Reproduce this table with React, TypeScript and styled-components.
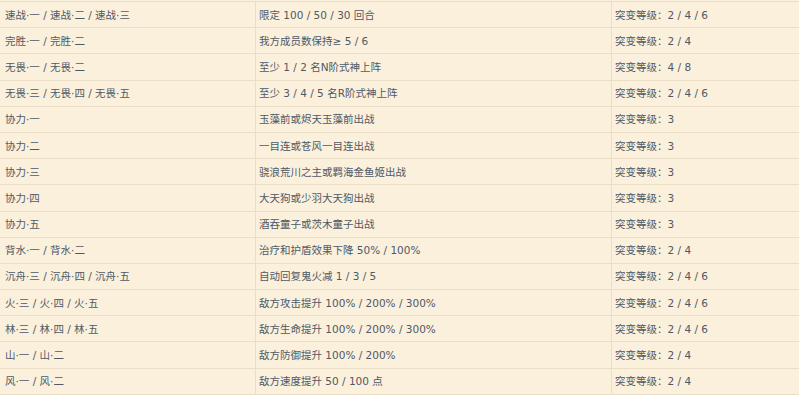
import * as React from "react";
import styled, { createGlobalStyle } from "styled-components";

interface BuffRow {
  name: string;
  effect: string;
  level: string;
}

const rows: BuffRow[] = [
  { name: "速战·一 / 速战·二 / 速战·三", effect: "限定 100 / 50 / 30 回合", level: "2 / 4 / 6" },
  { name: "完胜·一 / 完胜·二", effect: "我方成员数保持≥ 5 / 6", level: "2 / 4" },
  { name: "无畏·一 / 无畏·二", effect: "至少 1 / 2 名N阶式神上阵", level: "4 / 8" },
  { name: "无畏·三 / 无畏·四 / 无畏·五", effect: "至少 3 / 4 / 5 名R阶式神上阵", level: "2 / 4 / 6" },
  { name: "协力·一", effect: "玉藻前或烬天玉藻前出战", level: "3" },
  { name: "协力·二", effect: "一目连或苍风一目连出战", level: "3" },
  { name: "协力·三", effect: "骁浪荒川之主或羁海金鱼姬出战", level: "3" },
  { name: "协力·四", effect: "大天狗或少羽大天狗出战", level: "3" },
  { name: "协力·五", effect: "酒吞童子或茨木童子出战", level: "3" },
  { name: "背水·一 / 背水·二", effect: "治疗和护盾效果下降 50% / 100%", level: "2 / 4" },
  { name: "沉舟·三 / 沉舟·四 / 沉舟·五", effect: "自动回复鬼火减 1 / 3 / 5", level: "2 / 4 / 6" },
  { name: "火·三 / 火·四 / 火·五", effect: "敌方攻击提升 100% / 200% / 300%", level: "2 / 4 / 6" },
  { name: "林·三 / 林·四 / 林·五", effect: "敌方生命提升 100% / 200% / 300%", level: "2 / 4 / 6" },
  { name: "山·一 / 山·二", effect: "敌方防御提升 100% / 200%", level: "2 / 4" },
  { name: "风·一 / 风·二", effect: "敌方速度提升 50 / 100 点", level: "2 / 4" },
];

const GlobalStyle = createGlobalStyle`
  html, body {
    margin: 0;
    padding: 0;
    background: #fbf0dc;
    overflow: hidden;
  }
`;

const Page = styled.div`
  width: 799px;
  height: 395px;
  overflow: hidden;
  background: #fbf0dc;
  padding-top: 1px;
  box-sizing: border-box;
`;

const Table = styled.table`
  border-collapse: collapse;
  table-layout: fixed;
  width: 820px;
  font-family: "DejaVu Sans", "Noto Sans CJK SC", sans-serif;
  font-size: 10.5px;
  color: #4f5966;
`;

const Row = styled.tr`
  height: 26.2px;
`;

const Cell = styled.td<{ $first?: boolean }>`
  border: 1px solid #ebdec6;
  border-left-color: ${(p) => (p.$first ? "transparent" : "#ebdec6")};
  padding: 0 0 0 ${(p) => (p.$first ? 4 : 3)}px;
  box-sizing: border-box;
  vertical-align: middle;
  white-space: nowrap;
  line-height: 16px;
`;

const Col = styled.col<{ $width: number }>`
  width: ${(p) => p.$width}px;
`;

export default function App() {
  return (
    <Page>
      <GlobalStyle />
      <Table>
        <colgroup>
          <Col $width={255} />
          <Col $width={356} />
          <Col $width={209} />
        </colgroup>
        <tbody>
          {rows.map((r) => (
            <Row key={r.name}>
              <Cell $first>{r.name}</Cell>
              <Cell>{r.effect}</Cell>
              <Cell>突变等级：{r.level}</Cell>
            </Row>
          ))}
        </tbody>
      </Table>
    </Page>
  );
}
